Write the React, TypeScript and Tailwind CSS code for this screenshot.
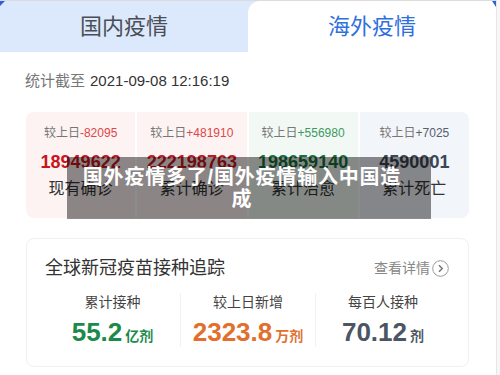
import React from 'react';

const font = { fontFamily: '"Liberation Sans", "Noto Sans CJK SC", sans-serif' };

interface StatCard {
    diff: string;
    value: string;
    label: string;
    bg: string;
    diffColor: string;
    valueColor: string;
}

const cards: StatCard[] = [
    { diff: '-82095', value: '18949622', label: '现有确诊', bg: 'bg-[#fdf3f3]', diffColor: 'text-[#e0454a]', valueColor: 'text-[#c8161d]' },
    { diff: '+481910', value: '222198763', label: '累计确诊', bg: 'bg-[#fdf3f3]', diffColor: 'text-[#e0454a]', valueColor: 'text-[#c8161d]' },
    { diff: '+556980', value: '198659140', label: '累计治愈', bg: 'bg-[#f2f9f4]', diffColor: 'text-[#3d9a63]', valueColor: 'text-[#17703d]' },
    { diff: '+7025', value: '4590001', label: '累计死亡', bg: 'bg-[#f2f5f9]', diffColor: 'text-[#55606c]', valueColor: 'text-[#3c4654]' },
];

const vaccine = [
    { label: '累计接种', value: '55.2', unit: '亿剂', color: 'text-[#1c8a4b]' },
    { label: '较上日新增', value: '2323.8', unit: '万剂', color: 'text-[#e0702c]' },
    { label: '每百人接种', value: '70.12', unit: '剂', color: 'text-[#4b5563]' },
];

export default function App() {
    return (
        <div className="w-[500px] h-[375px] overflow-hidden bg-[#f7f7f7] flex" style={font}>
            <div className="relative w-[497px] h-full bg-white border-r border-[#e6e6e6] border-t border-t-[#dcdcdc]">
                {/* corner marks */}
                <div className="absolute left-0 top-0 w-0 h-0 border-t-[5px] border-t-[#2e62d9] border-r-[5px] border-r-transparent z-10" />
                <div className="absolute right-0 top-0 w-0 h-0 border-t-[6px] border-t-[#2e62d9] border-l-[4px] border-l-transparent z-10" />

                {/* tabs */}
                <div className="flex h-[51px] bg-[#dce9fc]">
                    <div className="w-[248px] flex items-center justify-center bg-[#dce9fc] rounded-br-[10px] text-[22px] text-[#4a4f57]">
                        国内疫情
                    </div>
                    <div className="flex-1 flex items-center justify-center bg-white rounded-tl-[12px] text-[22px] text-[#2f6fde]">
                        海外疫情
                    </div>
                </div>

                <div className="pl-[25px] pt-[20px] text-[15px] leading-[18px]">
                    <span className="text-[#777]">统计截至</span>
                    <span className="text-[#333] ml-[5px]">2021-09-08 12:16:19</span>
                </div>

                {/* stat cards */}
                <div className="relative mt-[22px] ml-[26px] w-[443px] grid grid-cols-4 gap-[2px]">
                    {cards.map((c, i) => (
                        <div
                            key={c.label}
                            className={`${c.bg} h-[106px] flex flex-col items-center pt-[13px] ${i === 0 ? 'rounded-l-[8px]' : ''} ${i === 3 ? 'rounded-r-[8px]' : ''}`}
                        >
                            <div className="text-[12px] leading-[16px]">
                                <span className="text-[#777]">较上日</span>
                                <span className={c.diffColor}>{c.diff}</span>
                            </div>
                            <div className={`mt-[10px] text-[18px] leading-[22px] font-bold ${c.valueColor}`}>{c.value}</div>
                            <div className="mt-[6px] text-[16px] leading-[20px] text-[#333]">{c.label}</div>
                        </div>
                    ))}
                </div>

                {/* caption overlay */}
                <div className="absolute left-[67px] top-[156px] w-[364px] h-[62px] bg-black/45 flex items-center pl-[13px] z-20">
                    <p className="w-[324px] text-white font-bold text-[20px] leading-[22px] tracking-[0.8px] text-center">
                        国外疫情多了/国外疫情输入中国造成
                    </p>
                </div>

                {/* vaccine card */}
                <div className="mt-[20px] ml-[26px] w-[443px] h-[129px] rounded-[8px] border border-[#f0f0f0] px-[18px] pt-[17px]">
                    <div className="flex items-center justify-between">
                        <span className="text-[18px] leading-[24px] text-[#333]">全球新冠疫苗接种追踪</span>
                        <span className="flex items-center gap-[2px] text-[14px] text-[#888] mr-[1px]">
                            查看详情
                            <svg width="17" height="17" viewBox="0 0 17 17">
                                <circle cx="8.5" cy="8.5" r="7.8" fill="none" stroke="#9a9a9a" strokeWidth="1" />
                                <path d="M7 5.2 L10.2 8.5 L7 11.8" fill="none" stroke="#777" strokeWidth="1.5" />
                            </svg>
                        </span>
                    </div>
                    <div className="mt-[13px] grid grid-cols-3">
                        {vaccine.map((v, i) => (
                            <div
                                key={v.label}
                                className={`flex flex-col items-center ${i > 0 ? 'border-l border-[#f1f1f1]' : ''}`}
                            >
                                <div className="text-[14px] leading-[18px] text-[#444]">{v.label}</div>
                                <div className={`mt-[6px] flex items-baseline font-bold ${v.color}`}>
                                    <span className="text-[26px] leading-[30px]">{v.value}</span>
                                    <span className="text-[14px] ml-[3px]">{v.unit}</span>
                                </div>
                            </div>
                        ))}
                    </div>
                </div>
            </div>
        </div>
    );
}
